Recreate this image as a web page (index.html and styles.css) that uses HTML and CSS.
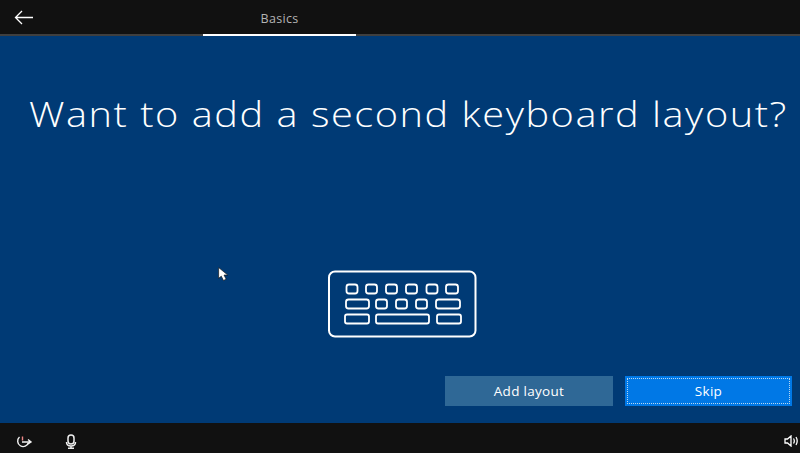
FILE: index.html
```html
<!DOCTYPE html>
<html lang="en">
<head>
    <meta charset="UTF-8">
    <title>Basics</title>
    <link rel="stylesheet" href="styles.css">
</head>
<body>
    <div class="screen">
        <header class="topbar">
            <button class="back" aria-label="Back">
                <svg width="20" height="15" viewBox="0 0 20 15"><path d="M8 1 1.500 7.500 8 14M1.500 7.500H19" fill="none" stroke="#fff" stroke-width="1.300"/></svg>
            </button>
            <div class="tab">Basics</div>
        </header>

        <main class="content">
            <h1>Want to add a second keyboard layout?</h1>

            <svg class="keyboard" width="150" height="68" viewBox="328 270 150 68" fill="none" stroke="#fff">
                <rect x="329" y="271.500" width="146.500" height="65" rx="6" stroke-width="2"/>
                <g stroke-width="1.800">
                    <rect x="346.500" y="284.500" width="11" height="9" rx="2.500"/>
                    <rect x="366" y="284.500" width="11" height="9" rx="2.500"/>
                    <rect x="386" y="284.500" width="11" height="9" rx="2.500"/>
                    <rect x="406" y="284.500" width="11" height="9" rx="2.500"/>
                    <rect x="426.500" y="284.500" width="11" height="9" rx="2.500"/>
                    <rect x="446" y="284.500" width="12" height="9" rx="2.500"/>
                    <rect x="346" y="299.500" width="23" height="9" rx="2.500"/>
                    <rect x="376" y="299.500" width="11" height="9" rx="2.500"/>
                    <rect x="396" y="299.500" width="11" height="9" rx="2.500"/>
                    <rect x="416" y="299.500" width="11" height="9" rx="2.500"/>
                    <rect x="436" y="299.500" width="24" height="9" rx="2.500"/>
                    <rect x="345" y="314.500" width="24" height="9" rx="2"/>
                    <rect x="376" y="314.500" width="53" height="9" rx="2"/>
                    <rect x="437" y="314.500" width="24" height="9" rx="2"/>
                </g>
            </svg>

            <div class="actions">
                <button class="btn btn-secondary">Add layout</button>
                <button class="btn btn-primary">Skip</button>
            </div>

            <svg class="pointer" width="12" height="14" viewBox="0 0 11 13"><path d="M.5.500v10l2.500-2 2 4 2.500-1.200-2-3.800h3.500z" fill="#fff" stroke="#111" stroke-width=".6"/></svg>
        </main>

        <footer class="bottombar">
            <div class="bottom-left">
                <svg width="18" height="14" viewBox="0 0 18 14" fill="none" stroke="#f2f2f2" stroke-width="1.400"><path d="M4.500 3A5.500 5.500 0 1 0 13.500 8.500"/><path d="M7.500 2.500v4" stroke="#e88"/><path d="M7 8h8M13 5.500 16 8l-3 2"/></svg>
                <svg width="12" height="15" viewBox="0 0 12 15" fill="none" stroke="#eee" stroke-width="1.500"><rect x="3" y="1" width="6" height="9" rx="3"/><path d="M1.500 8c0 3 2 4 4.500 4s4.500-1 4.500-4M6 12v2M3 14.200h6"/></svg>
            </div>
            <svg width="15" height="12" viewBox="0 0 15 12" fill="none" stroke="#fff" stroke-width="1.300"><path d="M1 4h2.500L7 1v10L3.500 8H1z"/><path d="M9.500 3.500c1 1.500 1 3.500 0 5M12 2c1.500 2.500 1.500 5.500 0 8"/></svg>
        </footer>
    </div>
</body>
</html>
```

FILE: styles.css
```css
* {
    box-sizing: border-box;
}

body {
    margin: 0;
    font-family: "Open Sans", "Liberation Sans", sans-serif;
    background-color: #003a75;
    color: #fff;
}

.screen {
    display: flex;
    flex-direction: column;
    height: 453px;
    overflow: hidden;
}

.topbar {
    display: flex;
    flex: none;
    height: 36px;
    background-color: #111;
    border-bottom: 2px solid #3f3f3f;
}

.back {
    width: 203px;
    padding: 3px 0 0 14px;
    border: 0;
    background: none;
    text-align: left;
}

.tab {
    width: 153px;
    height: 36px;
    padding-top: 11px;
    border-bottom: 2px solid #fff;
    font-size: 12.500px;
    line-height: 16px;
    letter-spacing: .3px;
    text-align: center;
    color: #b4b4b4;
}

.content {
    position: relative;
    flex: 1;
    display: flex;
    flex-direction: column;
    background-color: #003a75;
}

h1 {
    margin: 54px 0 0 29px;
    font-size: 35px;
    font-weight: 300;
    line-height: 48px;
    letter-spacing: 1.350px;
    white-space: nowrap;
    transform: scaleX(1.135);
    transform-origin: left;
}

.keyboard {
    display: block;
    margin: 132px 0 0 328px;
}

.actions {
    display: flex;
    justify-content: flex-end;
    gap: 12px;
    margin: 38px 8px 0 0;
}

.btn {
    height: 30px;
    border: 0;
    font-family: inherit;
    font-size: 13.500px;
    letter-spacing: .3px;
    color: #fff;
}

.btn-secondary {
    width: 168px;
    background-color: #2f6896;
}

.btn-primary {
    width: 167px;
    background-color: #0078e6;
    outline: 1px dotted #b9d6ee;
    outline-offset: -3px;
}

.pointer {
    position: absolute;
    left: 218px;
    top: 231px;
}

.bottombar {
    display: flex;
    flex: none;
    align-items: center;
    justify-content: space-between;
    height: 30px;
    padding: 6px 1px 0 15px;
    background-color: #111;
}

.bottom-left {
    display: flex;
    align-items: center;
    gap: 32px;
}
```
